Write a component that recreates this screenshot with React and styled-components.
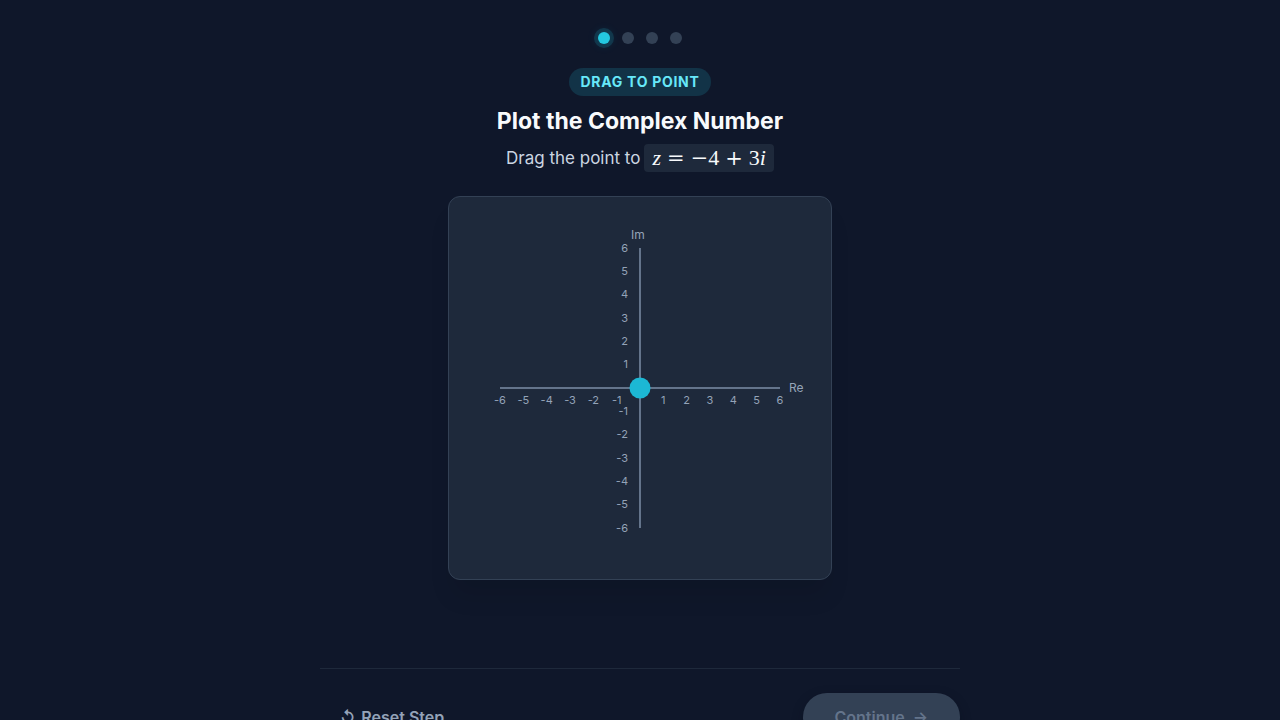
import React, { useRef, useState } from "react";
import styled, { createGlobalStyle } from "styled-components";

const RANGE = 6;
const AXIS = 140;
const UNIT = AXIS / RANGE;
const STEPS = 4;
const ticks = [-6, -5, -4, -3, -2, -1, 1, 2, 3, 4, 5, 6];

const clamp = (value) => Math.max(-RANGE, Math.min(RANGE, Math.round(value)));

const ComplexPlane = ({ point, onMove }) => {
  const svgRef = useRef(null);
  const [dragging, setDragging] = useState(false);

  const handleMove = (e) => {
    if (!dragging) return;
    const box = svgRef.current.getBoundingClientRect();
    const scale = 382 / box.width;
    const x = (e.clientX - box.left - box.width / 2) * scale;
    const y = (e.clientY - box.top - box.height / 2) * scale;
    onMove({ re: clamp(x / UNIT), im: clamp(-y / UNIT) });
  };

  return (
    <Plane
      ref={svgRef}
      viewBox="-191 -191 382 382"
      role="img"
      aria-label="Complex plane"
      onPointerMove={handleMove}
      onPointerUp={() => setDragging(false)}
    >
      <Axis x1={-AXIS} y1="0" x2={AXIS} y2="0" />
      <Axis x1="0" y1={-AXIS} x2="0" y2={AXIS} />
      {ticks.map((n) => (
        <Tick key={"re" + n} x={n * UNIT} y="16" textAnchor="middle">
          {n}
        </Tick>
      ))}
      {ticks.map((n) => (
        <Tick key={"im" + n} x="-12" y={Math.floor(-n * UNIT) + 4} textAnchor="end">
          {n}
        </Tick>
      ))}
      <AxisName x="149" y="4">
        Re
      </AxisName>
      <AxisName x="-9" y="-149">
        Im
      </AxisName>
      <Handle
        cx={point.re * UNIT}
        cy={-point.im * UNIT}
        r="10.5"
        onPointerDown={() => setDragging(true)}
      />
    </Plane>
  );
};

const App = () => {
  const [point, setPoint] = useState({ re: 0, im: 0 });
  const solved = point.re === -4 && point.im === 3;

  return (
    <Page>
      <GlobalStyle />
      <Content>
        <Progress>
          {Array.from({ length: STEPS }, (_, i) => (
            <Dot key={i} $active={i === 0} />
          ))}
        </Progress>
        <Badge>DRAG TO POINT</Badge>
        <Title>Plot the Complex Number</Title>
        <Prompt>
          Drag the point to
          <Formula>
            <Variable>z</Variable>
            <Operator>=</Operator>
            <span>
              <Operator>−</Operator>4
            </span>
            <Operator>+</Operator>
            <span>
              3<Variable>i</Variable>
            </span>
          </Formula>
        </Prompt>
        <Card>
          <ComplexPlane point={point} onMove={setPoint} />
        </Card>
        <Footer>
          <ResetButton type="button" onClick={() => setPoint({ re: 0, im: 0 })}>
            <span>↺</span>
            <span>Reset Step</span>
          </ResetButton>
          <ContinueButton type="button" disabled={!solved}>
            <span>Continue</span>
            <span>→</span>
          </ContinueButton>
        </Footer>
      </Content>
    </Page>
  );
};

export default App;

const GlobalStyle = createGlobalStyle`
  * {
    box-sizing: border-box;
  }

  body {
    margin: 0;
    background: #0f172a;
    font-family: Inter, "Liberation Sans", sans-serif;
    -webkit-font-smoothing: antialiased;
  }
`;
const Page = styled.main`
  height: 100vh;
  overflow-y: auto;
  scrollbar-width: none;
  padding: 32px 20px;
  color: #f8fafc;
`;
const Content = styled.div`
  display: flex;
  flex-direction: column;
  align-items: center;
  max-width: 640px;
  margin: 0 auto;
`;
const Progress = styled.div`
  display: flex;
  gap: 12px;
  margin-bottom: 24px;
`;
const Dot = styled.span`
  width: 12px;
  height: 12px;
  border-radius: 50%;
  background: ${({ $active }) => ($active ? "#24c8e0" : "#334155")};
  box-shadow: ${({ $active }) =>
    $active ? "0 0 0 4px rgba(34, 211, 238, 0.15), 0 0 12px rgba(34, 211, 238, 0.2)" : "none"};
`;
const Badge = styled.span`
  padding: 4px 12px;
  border-radius: 14px;
  background: #123347;
  color: #67e8f9;
  font-size: 14px;
  line-height: 20px;
  font-weight: 700;
  letter-spacing: 0.05em;
`;
const Title = styled.h1`
  margin: 10px 0 8px;
  font-size: 23px;
  line-height: 30px;
  font-weight: 700;
`;
const Prompt = styled.p`
  display: flex;
  align-items: center;
  gap: 4px;
  margin: 0 0 24px;
  color: #cbd5e1;
  font-size: 17px;
  line-height: 28px;
`;
const Formula = styled.span`
  display: flex;
  gap: 6px;
  padding: 0 8px;
  border-radius: 4px;
  background: #1e293b;
  color: #f8fafc;
  font-family: "Liberation Serif", "Times New Roman", serif;
  font-size: 22px;
`;
const Variable = styled.i`
  font-style: italic;
`;
const Operator = styled.span`
  font-family: "DejaVu Serif", serif;
  font-size: 21px;
`;
const Card = styled.section`
  width: 100%;
  max-width: 384px;
  border: 1px solid #334155;
  border-radius: 12px;
  background: #1e293b;
  box-shadow: 0 20px 25px -5px rgba(0, 0, 0, 0.1);
`;
const Plane = styled.svg`
  display: block;
  width: 100%;
  height: auto;
  touch-action: none;
`;
const Axis = styled.line`
  stroke: #64748b;
  stroke-width: 2;
`;
const Tick = styled.text`
  fill: #94a3b8;
  font-size: 11px;
`;
const AxisName = styled.text`
  fill: #94a3b8;
  font-size: 12px;
`;
const Handle = styled.circle`
  fill: #1cb8d4;
  cursor: grab;
`;
const Footer = styled.footer`
  display: flex;
  justify-content: space-between;
  align-items: center;
  width: 100%;
  margin-top: 88px;
  padding-top: 24px;
  border-top: 1px solid #1e293b;
`;
const Button = styled.button`
  display: flex;
  align-items: center;
  gap: 8px;
  border: 0;
  font-family: inherit;
  font-size: 16px;
  line-height: 24px;
  cursor: pointer;
`;
const ResetButton = styled(Button)`
  gap: 6px;
  padding: 12px 20px;
  background: transparent;
  color: #94a3b8;
  font-weight: 600;
`;
const ContinueButton = styled(Button)`
  padding: 12px 32px;
  border-radius: 24px;
  background: #22d3ee;
  color: #0f172a;
  font-weight: 600;
  box-shadow: 0 4px 12px rgba(2, 12, 27, 0.3);

  &:disabled {
    background: #334155;
    color: #64748b;
    cursor: not-allowed;
  }
`;
